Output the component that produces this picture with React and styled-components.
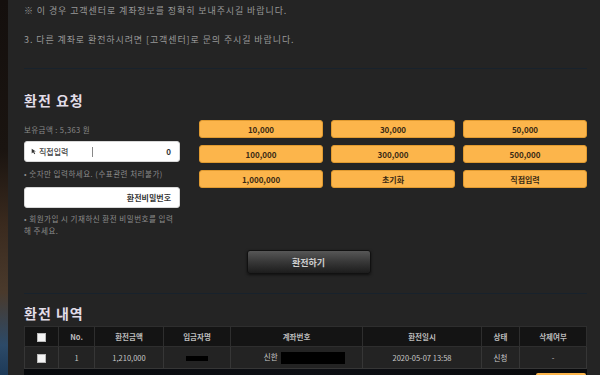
import React from 'react'
import styled, { createGlobalStyle } from 'styled-components'

const GlobalStyle = createGlobalStyle`
  html, body {
    margin: 0;
    padding: 0;
    background: #242424;
    overflow: hidden;
  }
  body {
    font-family: "Noto Sans CJK KR", "Noto Sans", sans-serif;
  }
`

const Page = styled.div`
  display: flex;
  width: 600px;
  height: 375px;
  overflow: hidden;
`

const SideStrip = styled.div`
  width: 8px;
  flex-shrink: 0;
  background: linear-gradient(180deg, #140f0d 0%, #1a1410 40%, #3a2a1e 60%, #4a3a2c 78%, #2c4a68 92%, #1d3a58 100%);
`

const Panel = styled.div`
  flex: 1;
  background: #242424;
  padding: 0 14px 0 16px;
  display: flex;
  flex-direction: column;
`

const Notice = styled.p`
  margin: ${p => p.$top}px 0 0;
  font-size: 9px;
  line-height: 12px;
  color: #989898;
  letter-spacing: 0.9px;
`

const Divider = styled.hr`
  margin: ${p => p.$top}px 0 0;
  border: 0;
  height: 1px;
  flex-shrink: 0;
  background: #18222c;
`

const Heading = styled.h2`
  margin: ${p => p.$top}px 0 0;
  font-size: 14px;
  line-height: 16px;
  height: 16px;
  font-weight: 700;
  color: #e2dde8;
  letter-spacing: 1px;
`

const RequestRow = styled.div`
  display: flex;
  gap: 19px;
  margin-top: 12px;
`

const LeftCol = styled.div`
  width: 156px;
  display: flex;
  flex-direction: column;
`

const Balance = styled.div`
  margin-top: 4px;
  font-size: 7.5px;
  line-height: 12px;
  color: #8a8a8a;
  letter-spacing: 0.4px;
`

const InputBox = styled.div`
  margin-top: ${p => p.$top}px;
  height: 21px;
  box-sizing: border-box;
  background: #fff;
  border: 1px solid #d8d8d8;
  border-radius: 3px;
  display: flex;
  align-items: center;
  justify-content: ${p => (p.$right ? 'flex-end' : 'space-between')};
  padding: 0 8px 0 6px;
  font-size: 8px;
  font-weight: 700;
  color: #333;
`

const InputLabel = styled.span`
  display: flex;
  align-items: center;
  gap: 1px;
  font-weight: 500;
  color: #444;
`

const Caret = styled.span`
  width: 1px;
  height: 10px;
  background: #888;
  margin-left: 24px;
  margin-right: auto;
`

const Hint = styled.div`
  margin-top: ${p => p.$top}px;
  font-size: 7.5px;
  line-height: 12px;
  color: #8c8c8c;
  letter-spacing: 0.5px;
`

const AmountGrid = styled.div`
  flex: 1;
  display: grid;
  grid-template-columns: repeat(3, 1fr);
  column-gap: 8px;
  row-gap: 7px;
  align-content: start;
`

const AmountButton = styled.button`
  height: 18px;
  border: 1px solid #e09a30;
  border-radius: 3px;
  background: #fcb54b;
  color: #3a2a14;
  font-family: inherit;
  font-size: 8px;
  font-weight: 700;
  padding: 0;
`

const SubmitWrap = styled.div`
  display: flex;
  justify-content: center;
  margin-top: 13px;
  padding-left: 6px;
`

const SubmitButton = styled.button`
  width: 124px;
  height: 24px;
  border: 1px solid #111;
  border-radius: 3px;
  background: linear-gradient(180deg, #575757 0%, #3a3a3a 45%, #1c1c1c 100%);
  box-shadow: 0 1px 3px rgba(0, 0, 0, 0.6);
  color: #cfcfcf;
  font-family: inherit;
  font-size: 9px;
  font-weight: 700;
`

const Table = styled.table`
  margin-top: 5px;
  width: 562px;
  border-collapse: collapse;
  table-layout: fixed;
  font-size: 7.5px;
  color: #c8c8c8;
  text-align: center;

  th {
    height: 19px;
    padding: 0;
    background: #141414;
    border: 1px solid #2e2e2e;
    font-weight: 700;
    color: #bdbdbd;
  }

  td {
    height: 21px;
    padding: 0;
    background: #232323;
    border: 1px solid #363636;
  }
`

const AccountCell = styled.td`
  && {
    padding-left: 16px;
  }
`

const Check = styled.span`
  display: inline-block;
  width: 7px;
  height: 7px;
  background: #f4f4f4;
  border: 1px solid #bbb;
  vertical-align: middle;
`

const Redact = styled.span`
  display: inline-block;
  width: ${p => p.$w}px;
  height: ${p => p.$h}px;
  background: #000;
  vertical-align: middle;
  margin-left: ${p => p.$ml || 0}px;
`

const BottomStrip = styled.div`
  height: 10px;
  flex-shrink: 0;
  background: linear-gradient(90deg, #07090c 0%, #0d0f14 50%, #08090b 100%);
  display: flex;
  justify-content: flex-end;
  align-items: flex-end;
`

const OrangeTab = styled.div`
  width: 50px;
  height: 6px;
  background: #fcb54b;
  border-radius: 2px 2px 0 0;
  margin-right: 1px;
`

const amounts = ['10,000', '30,000', '50,000', '100,000', '300,000', '500,000', '1,000,000', '초기화', '직접입력']

const cols = [34, 36, 69, 67, 132, 119, 38, 67]

const App = () => {
  return (
    <Page>
      <GlobalStyle />
      <SideStrip />
      <Panel>
        <Notice $top={5}>※ 이 경우 고객센터로 계좌정보를 정확히 보내주시길 바랍니다.</Notice>
        <Notice $top={17}>3. 다른 계좌로 환전하시려면 [고객센터]로 문의 주시길 바랍니다.</Notice>
        <Divider $top={22} />
        <Heading $top={23}>환전 요청</Heading>

        <RequestRow>
          <LeftCol>
            <Balance>보유금액 : 5,363 원</Balance>
            <InputBox $top={5}>
              <InputLabel>
                <svg width="7" height="7" viewBox="0 0 10 10">
                  <path d="M1 1 L1 8 L3 6 L5 9 L6 8 L4 5 L7 5 Z" fill="#333" />
                </svg>
                직접입력
              </InputLabel>
              <Caret />
              <span>0</span>
            </InputBox>
            <Hint $top={6}>• 숫자만 입력하세요. (수표관련 처리불가)</Hint>
            <InputBox $top={7} $right>환전비밀번호</InputBox>
            <Hint $top={5}>• 회원가입 시 기재하신 환전 비밀번호를 입력<br />해 주세요.</Hint>
          </LeftCol>
          <AmountGrid>
            {amounts.map(a => (
              <AmountButton key={a}>{a}</AmountButton>
            ))}
          </AmountGrid>
        </RequestRow>

        <SubmitWrap>
          <SubmitButton>환전하기</SubmitButton>
        </SubmitWrap>

        <Divider $top={19} />
        <Heading $top={11}>환전 내역</Heading>

        <Table>
          <colgroup>
            {cols.map((w, i) => (
              <col key={i} style={{ width: w }} />
            ))}
          </colgroup>
          <thead>
            <tr>
              <th><Check /></th>
              <th>No.</th>
              <th>환전금액</th>
              <th>입금자명</th>
              <th>계좌번호</th>
              <th>환전일시</th>
              <th>상태</th>
              <th>삭제여부</th>
            </tr>
          </thead>
          <tbody>
            <tr>
              <td><Check /></td>
              <td>1</td>
              <td>1,210,000</td>
              <td><Redact $w={22} $h={5} /></td>
              <AccountCell>신한 <Redact $w={64} $h={12} $ml={2} /></AccountCell>
              <td>2020-05-07 13:58</td>
              <td>신청</td>
              <td>-</td>
            </tr>
          </tbody>
        </Table>
        <BottomStrip>
          <OrangeTab />
        </BottomStrip>
      </Panel>
    </Page>
  )
}

export default App
